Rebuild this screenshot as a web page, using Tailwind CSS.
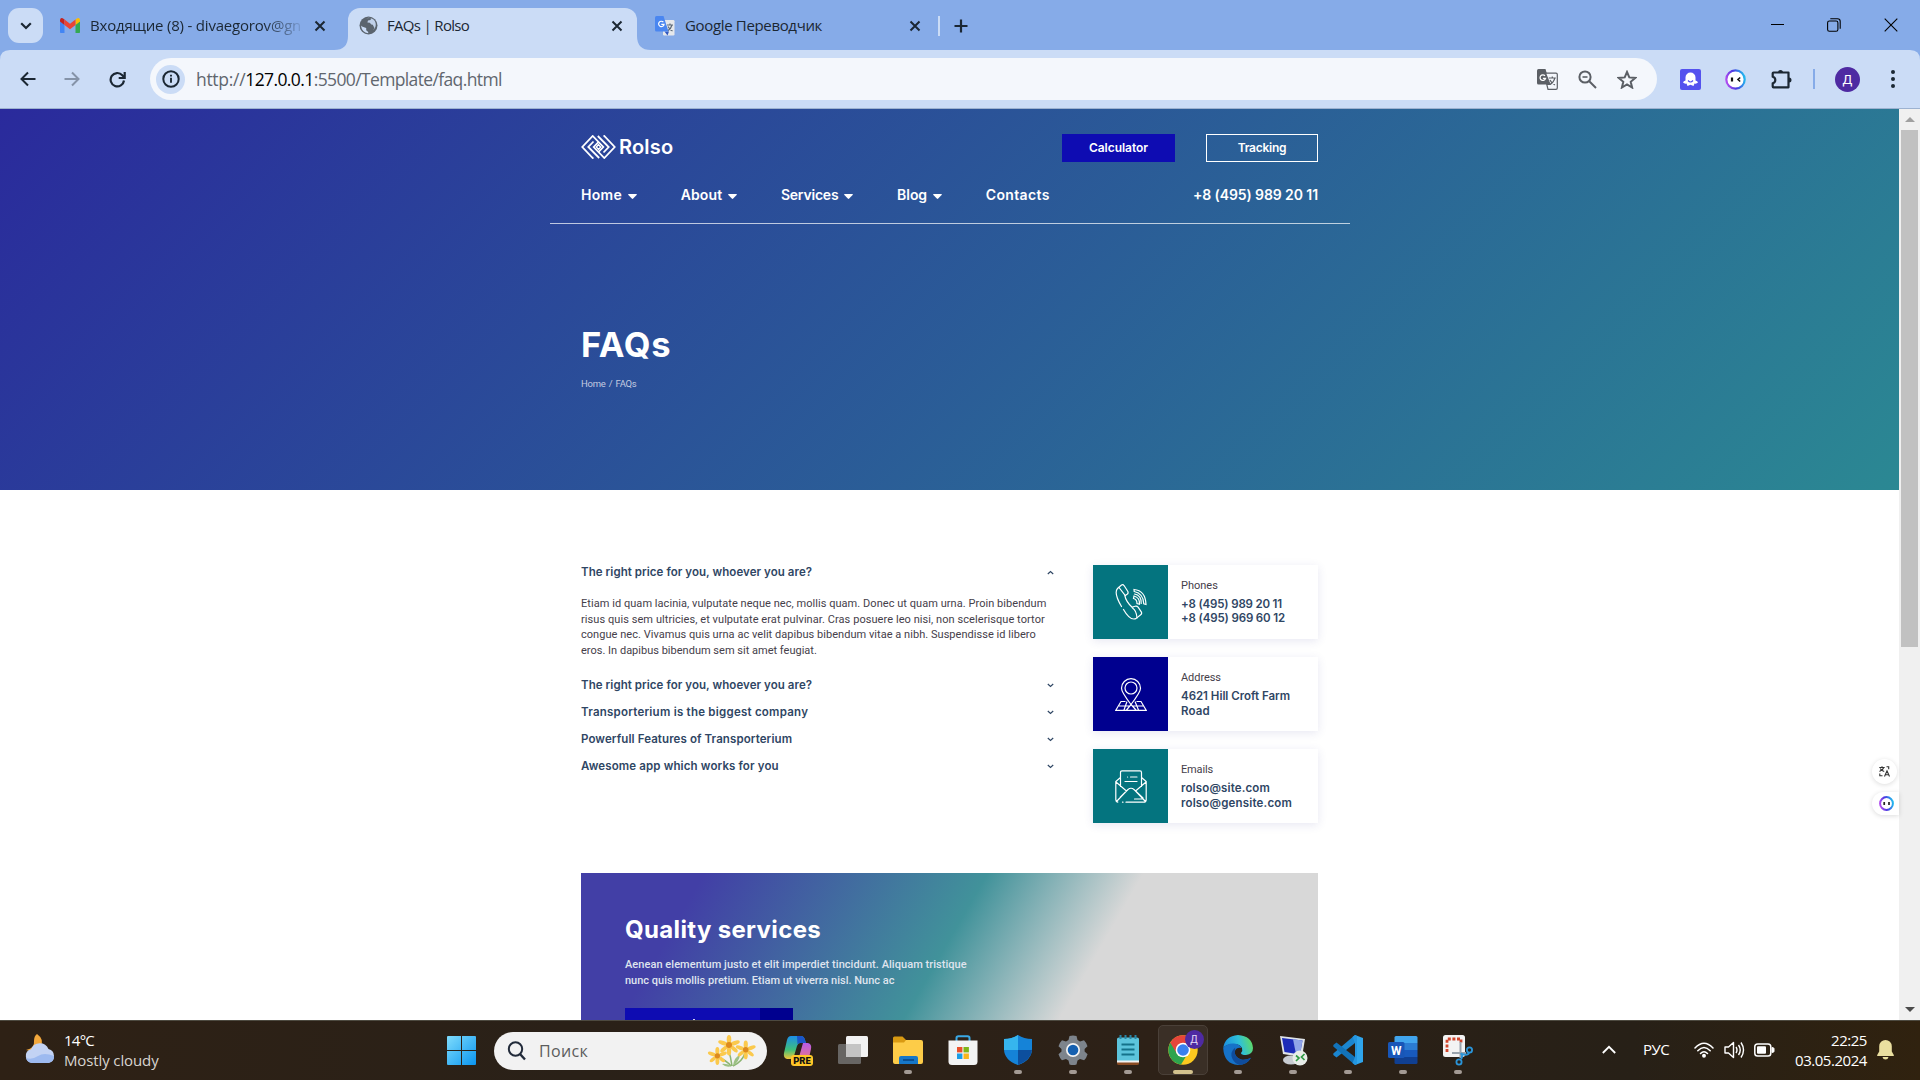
<!DOCTYPE html>
<html lang="ru">
<head>
<meta charset="utf-8">
<title>FAQs | Rolso</title>
<script src="https://cdn.jsdelivr.net/npm/@tailwindcss/browser@4"></script>
</head>
<body class="w-[1920px] h-[1080px] overflow-hidden flex flex-col bg-[#cbdcf6] font-['Open_Sans','Noto_Sans',sans-serif] text-[#1b2733]">

<svg class="absolute w-0 h-0">
  <defs>
    <linearGradient id="ring" x1="0" y1="0.6" x2="1" y2="0.4"><stop offset="0" stop-color="#b04cf0"/><stop offset=".45" stop-color="#4a38e0"/><stop offset="1" stop-color="#22b8ee"/></linearGradient>
    <symbol id="x" viewBox="0 0 12 12"><path d="M1.5 1.5l9 9M10.5 1.5l-9 9" stroke="currentColor" stroke-width="2" fill="none"/></symbol>
    <symbol id="caret" viewBox="0 0 9 5"><path d="M.6 0h7.8q.8.2.2.9L5.2 4.6q-.7.7-1.4 0L.4.9Q-.2.2.6 0z" fill="currentColor"/></symbol>
    <symbol id="chev" viewBox="0 0 7 5"><path d="M.8 1l2.700 2.400L6.200 1" fill="none" stroke="currentColor" stroke-width="1.200"/></symbol>
  </defs>
</svg>

<!-- Tab strip -->
<header class="h-[50px] shrink-0 bg-[#86abe8] flex items-end">
  <div class="w-[348px] h-[50px] pl-2 pt-2 flex relative">
    <div class="w-[35px] h-[35px] rounded-[11px] bg-[#cbdcf6] grid place-items-center"><svg width="12" height="8" viewBox="0 0 12 8"><path d="M1.2 1.2L6 6l4.800-4.800" fill="none" stroke="#1b2733" stroke-width="2.200"/></svg></div>
    <div class="ml-[17px] h-[35px] flex items-center flex-1">
      <svg width="20" height="15" viewBox="0 0 20 15"><path d="M0 2v12.200q0 .8.800.8h3.700V6.500L0 3z" fill="#4285f4"/><path d="M20 2v12.200q0 .8-.8.8h-3.700V6.500L20 3z" fill="#34a853"/><path d="M0 2Q.4-.6 2.700.3L4.500 1.500v5.500L0 3.600z" fill="#c5221f"/><path d="M20 2Q19.600-.6 17.300.3l-1.800 1.200v5.500L20 3.600z" fill="#fbbc04"/><path d="M4.500 1.500L10 5.700l5.500-4.200V7L10 11.200 4.500 7z" fill="#ea4335"/></svg>
      <span class="ml-[10px] w-[212px] overflow-hidden whitespace-nowrap text-[15px] tracking-[-0.200px] [mask-image:linear-gradient(to_right,black_82%,transparent_102%)]">Входящие (8) - divaegorov@gn</span>
      <svg class="ml-[12px] w-3 h-3"><use href="#x"/></svg>
    </div>
    <svg class="absolute right-0 bottom-0" width="14" height="14"><path d="M14 0v14H0Q14 14 14 0z" fill="#cbdcf6"/></svg>
    <svg class="absolute left-0 -bottom-[10px] z-10" width="10" height="10"><path d="M0 0h10Q0 0 0 10z" fill="#86abe8"/></svg>
  </div>
  <div class="w-[289px] h-[42px] rounded-t-[12px] bg-[#cbdcf6] flex items-start">
    <div class="w-full h-[35px] flex items-center pl-[11px]">
      <svg width="19" height="19" viewBox="0 0 19 19"><circle cx="9.500" cy="9.500" r="9" fill="#5b646e"/><path d="M3 10.500l4.200 1.600v2.200l2 1.700v1.300Q3 16.500 1.900 9.500z" fill="#cbdcf6"/><path d="M7 2.300Q10 1.200 12 2.200l-.4 1.800-2.600.5-.6 2 2.400.3 1.500 1.600 1.500.4 1.600 3.200-1.200 2.300q3.300-3.300 2.400-7.200Q15.500 2.500 10.500 2z" fill="#cbdcf6" opacity=".9"/></svg>
      <span class="ml-[9px] w-[224px] whitespace-nowrap text-[15px] tracking-[-0.680px]">FAQs | Rolso</span>
      <svg class="w-3 h-3"><use href="#x"/></svg>
    </div>
  </div>
  <div class="flex-1 h-[50px] pt-2 relative flex">
    <svg class="absolute left-0 bottom-0" width="14" height="14"><path d="M0 0v14h14Q0 14 0 0z" fill="#cbdcf6"/></svg>
    <div class="h-[35px] flex items-center pl-[18px] flex-1">
      <svg width="20" height="20" viewBox="0 0 20 20"><rect x="8" y="4" width="11.500" height="15.500" rx="1.200" fill="#e6e8eb"/><path d="M12 9h6M15 7.500V9M17 9q-1 4-4.500 6M13 10.500q1.500 3 4.500 4.500" stroke="#5f6b78" stroke-width="1.200" fill="none"/><path d="M9.500 15.500l3 4 1.500-4z" fill="#3057c0"/><path d="M1.500 0H8.500L13.500 15.500H1.500Q0 15.500 0 14V1.500Q0 0 1.500 0z" fill="#4a86f0"/><path d="M8.400 6.200A2.700 2.700 0 1 0 9 8.300H6.300" stroke="#fff" stroke-width="1.200" fill="none"/></svg>
      <span class="ml-[10px] w-[224px] whitespace-nowrap text-[15px] tracking-[-0.340px]">Google Переводчик</span>
      <svg class="w-3 h-3"><use href="#x"/></svg>
      <span class="ml-[17px] w-[2px] h-5 bg-[#cbdcf6]"></span>
      <svg class="ml-[14px]" width="14" height="14"><path d="M7 .5v13M.5 7h13" stroke="#1b2733" stroke-width="2.200"/></svg>
    </div>
    <div class="h-[34px] flex items-center gap-[43px] pr-[22px] text-black">
      <svg width="13" height="14" viewBox="0 0 13 14"><path d="M0 6.500h13" stroke="currentColor"/></svg>
      <svg width="14" height="14" viewBox="0 0 14 14" fill="none" stroke="currentColor" stroke-width="1.100"><rect x=".6" y="3" width="10.300" height="10.300" rx="1.800"/><path d="M3.300.8H10.500Q13.200.8 13.200 3.500v7.200"/></svg>
      <svg width="14" height="14" viewBox="0 0 14 14"><path d="M.7.7l12.600 12.600M13.300.7L.7 13.300" stroke="currentColor" stroke-width="1.100"/></svg>
    </div>
  </div>
</header>

<!-- Toolbar -->
<div class="h-[59px] shrink-0 border-b border-[#9db2d0] flex items-center pl-5 relative">
  <svg width="16" height="16" viewBox="0 0 16 16" fill="none" stroke="#1b2733" stroke-width="2"><path d="M15.500 8H2M8 1.500L1.500 8 8 14.500"/></svg>
  <svg class="ml-[28px]" width="16" height="16" viewBox="0 0 16 16" fill="none" stroke="#8593a8" stroke-width="2"><path d="M.5 8H14M8 1.500L14.500 8 8 14.500"/></svg>
  <svg class="ml-[29px]" width="17" height="17" viewBox="0 0 17 17" fill="none" stroke="#1b2733" stroke-width="2.200"><path d="M15 9.500A6.700 6.700 0 1 1 13.300 4.200L15 6"/><path d="M15.700 1v6h-6" /></svg>
  <div class="ml-[24px] w-[1507px] h-[42px] rounded-full bg-[#f4f7fc] flex items-center pl-[6px] pr-[20px]">
    <span class="w-[29px] h-[29px] rounded-full bg-[#cbdcf6] grid place-items-center"><svg width="18" height="18" viewBox="0 0 18 18"><circle cx="9" cy="9" r="7.700" fill="none" stroke="#1b2733" stroke-width="2"/><path d="M9 7.800v5M9 4.700v1.900" stroke="#1b2733" stroke-width="1.900"/></svg></span>
    <div class="ml-[11px] pt-px flex-1 whitespace-nowrap text-[17.500px] text-[#60666e] flex"><span class="tracking-[-0.300px]">http://</span><span class="text-black tracking-[-0.600px]">127.0.0.1</span><span class="tracking-[-0.630px]">:5500/Template/faq.html</span></div>
    <svg width="21" height="21" viewBox="0 0 21 21"><path d="M1.500 0H8.500L13 15.500H1.500Q0 15.500 0 14V1.500Q0 0 1.500 0z" fill="#5b5f65"/><path d="M8.500 4.200H19q1.300 0 1.300 1.300V19q0 1.300-1.300 1.300H11L9.800 15.500h3.200z" fill="#f4f7fc" stroke="#5b5f65" stroke-width="1.200"/><path d="M11.800 9h7M15.300 7.500V9M17.800 9q-1 4.500-5 6.500M13 11q1.500 3.500 5 5" stroke="#5b5f65" stroke-width="1.200" fill="none"/><path d="M8 6.800A2.800 2.800 0 1 0 8.600 9.300H5.900" stroke="#fff" stroke-width="1.300" fill="none"/></svg>
    <svg class="ml-[20px]" width="19" height="19" viewBox="0 0 19 19" fill="none" stroke="#5b5f65" stroke-width="2"><circle cx="7" cy="7" r="5.600"/><path d="M11 11l7 7"/><path d="M4.500 7h5" stroke-width="1.600"/></svg>
    <svg class="ml-[20px]" width="20" height="19" viewBox="0 0 20 19"><path d="M10 2l2.300 5.400 5.900.5-4.500 3.900 1.400 5.700L10 14.400l-5.100 3.100 1.400-5.700L1.800 7.900l5.900-.5z" fill="none" stroke="#5b5f65" stroke-width="2"/></svg>
  </div>
  <svg class="ml-[23px]" width="21" height="21" viewBox="0 0 21 21"><rect width="21" height="21" rx="2" fill="#5452ee"/><path d="M10.500 3.500a5 5 0 0 1 5 5v3q2 .3 2.500 2-1.500 1.500-3.500 1l-1 2.500-3-1.200-3 1.200-1-2.500q-2 .5-3.500-1 .5-1.700 2.500-2v-3a5 5 0 0 1 5-5z" fill="#fff"/><path d="M8 11.500q2.500 3 5 0" fill="none" stroke="#5452ee" stroke-width="1.200"/></svg>
  <svg class="ml-[24px]" width="21" height="21" viewBox="0 0 21 21"><circle cx="10.500" cy="10.500" r="9.200" fill="#fff" stroke="url(#ring)" stroke-width="2.200"/><path d="M7 8.500v4" stroke="#111" stroke-width="2.200"/><path d="M15.200 8.500l-2.200 2 2.200 2" stroke="#111" stroke-width="1.600" fill="none"/></svg>
  <svg class="ml-[25px]" width="21" height="21" viewBox="0 0 21 21"><path d="M2.500 3.500h15v14.800h-15q-.8 0-.8-.8v-3.300q2.600-.6 2.600-3.200T1.700 7.700V4.300q0-.8.800-.8z" fill="none" stroke="#1b2733" stroke-width="2.200" stroke-linejoin="round"/><path d="M7 3.500a2.500 2.500 0 0 1 5 0zM18 8.500a2.500 2.500 0 0 1 0 5z" fill="#1b2733"/></svg>
  <span class="ml-[21px] w-[2px] h-5 bg-[#86abe8]"></span>
  <span class="ml-[20px] w-[25px] h-[25px] rounded-full bg-[#4e2aa2] text-white grid place-items-center font-['Roboto'] text-[13px] leading-none">Д</span>
  <svg class="ml-[31px]" width="4" height="18" fill="#1b2733"><circle cx="2" cy="2" r="2"/><circle cx="2" cy="9" r="2"/><circle cx="2" cy="16" r="2"/></svg>
  <svg class="absolute right-0 top-0" width="10" height="10"><path d="M10 0H0Q10 0 10 10z" fill="#86abe8"/></svg>
</div>

<!-- Viewport -->
<div class="h-[911px] shrink-0 flex bg-white relative overflow-hidden font-['Inter',sans-serif]">
  <div class="w-[1899px] h-full">
    <section class="h-[381px] bg-[linear-gradient(135deg,#2a2a9c,#2b8893)] pl-[550px] pt-[25px] text-white whitespace-nowrap">
      <div class="w-[800px] h-[90px] pl-[31px] pr-[32px] border-b border-white/70">
        <div class="h-[28px] flex items-center">
          <svg class="-mt-[2px]" width="35" height="24" viewBox="0 0 35 24" fill="none" stroke="#fff" stroke-width="1.800"><path d="M12.500 22.500L11.700 23 1.300 12 11.700 1 22.300 12l-4.800 5"/><path d="M22.500 1.500l.8-.5L33.700 12 23.300 23 12.700 12l4.800-5"/><path d="M18.200 23L7.300 12l5.200-5.500M16.800 1L27.700 12l-5.200 5.500"/><path d="M17.500 9.600l2.200 2.400-2.200 2.400-2.200-2.400z" stroke-width="1.400"/></svg>
          <span class="ml-[3px] -mt-[2px] text-[20px] font-semibold tracking-[0.200px] leading-6 flex-1">Rolso</span>
          <span class="w-[113px] h-[28px] pb-px bg-[#0e0cb2] grid place-items-center text-[12px] font-semibold tracking-[-0.040px]">Calculator</span>
          <span class="ml-[31px] w-[112px] h-[28px] pb-px border border-white grid place-items-center text-[12px] font-semibold tracking-[-0.250px]">Tracking</span>
        </div>
        <nav class="mt-[23px] h-5 leading-5 text-[14px] font-semibold flex items-center gap-[43.700px]">
          <span class="flex items-center gap-[6px]"><span class="tracking-[0.290px]">Home</span><svg class="w-[9px] h-[5px] mt-[2px]"><use href="#caret"/></svg></span>
          <span class="flex items-center gap-[6px]"><span class="tracking-[0.110px]">About</span><svg class="w-[9px] h-[5px] mt-[2px]"><use href="#caret"/></svg></span>
          <span class="flex items-center gap-[6px]"><span class="tracking-[-0.210px]">Services</span><svg class="w-[9px] h-[5px] mt-[2px]"><use href="#caret"/></svg></span>
          <span class="flex items-center gap-[6px]"><span class="tracking-[-0.050px]">Blog</span><svg class="w-[9px] h-[5px] mt-[2px]"><use href="#caret"/></svg></span>
          <span class="tracking-[0.360px] flex-1">Contacts</span>
          <span class="tracking-[-0.090px]">+8 (495) 989 20 11</span>
        </nav>
      </div>
      <h1 class="ml-[31px] mt-[101px] h-10 leading-10 text-[34.500px] font-bold tracking-[0.700px]">FAQs</h1>
      <p class="ml-[31px] mt-[12px] h-[14px] leading-[14px] text-[9.500px] tracking-[-0.250px] [word-spacing:1px] text-[#c3cbe0] font-['Roboto']">Home / FAQs</p>
    </section>

    <main class="ml-[581px] w-[737px] pt-[72px]">
      <div class="flex justify-between">
        <div class="w-[473px] pt-px text-[11.500px] font-semibold text-[#2f4664] whitespace-nowrap">
          <div class="h-5 flex items-center justify-between"><span class="tracking-[0.060px]">The right price for you, whoever you are?</span><svg class="w-[7px] h-[5px] rotate-180 mb-px"><use href="#chev"/></svg></div>
          <div class="mt-[13px] mb-[13px] h-[62.400px] font-['Roboto'] font-normal text-[11px] leading-[15.600px] text-[#45404a]">
            <p class="tracking-[0.050px]">Etiam id quam lacinia, vulputate neque nec, mollis quam. Donec ut quam urna. Proin bibendum</p>
            <p class="tracking-[0.070px]">risus quis sem ultricies, et vulputate erat pulvinar. Cras posuere leo nisi, non scelerisque tortor</p>
            <p class="tracking-[0.040px]">congue nec. Vivamus quis urna ac velit dapibus bibendum vitae a nibh. Suspendisse id libero</p>
            <p class="tracking-[0.010px]">eros. In dapibus bibendum sem sit amet feugiat.</p>
          </div>
          <div class="mt-[14px] h-[27px] flex items-center justify-between"><span class="tracking-[0.060px]">The right price for you, whoever you are?</span><svg class="w-[7px] h-[5px]"><use href="#chev"/></svg></div>
          <div class="h-[27px] flex items-center justify-between"><span class="tracking-[0.240px]">Transporterium is the biggest company</span><svg class="w-[7px] h-[5px]"><use href="#chev"/></svg></div>
          <div class="h-[27px] flex items-center justify-between"><span class="tracking-[0.100px]">Powerfull Features of Transporterium</span><svg class="w-[7px] h-[5px]"><use href="#chev"/></svg></div>
          <div class="h-[27px] flex items-center justify-between"><span class="tracking-[0.130px]">Awesome app which works for you</span><svg class="w-[7px] h-[5px]"><use href="#chev"/></svg></div>
        </div>

        <aside class="mt-[3px] w-[225px] flex flex-col gap-[18px] text-[11.500px] leading-[15px] font-semibold text-[#2f4664] whitespace-nowrap">
          <div class="h-[74px] flex bg-white shadow-[0_2px_9px_rgba(60,60,150,0.12)]">
            <div class="w-[75px] bg-[#04747f] grid place-items-center"><svg width="32" height="36" viewBox="0 0 32 36" fill="none" stroke="#fff" stroke-width="1.200" stroke-linecap="round"><path d="M6.500 22.500Q-1.500 9 2.500 4.500L6.500 1q1.500-.8 2.700.8l3.500 5.500q1 1.800-.6 3l-2.200 1.500q1 5.500 7.200 11.500l2.700-1q2-.8 3.300.8l3.300 5q.8 1.800-1 3l-4.500 3.500Q15 37 8.500 25.500"/><path d="M4 3.500l6.500 8.300M17.500 24q4 2.500 4.500 10"/><path d="M18.500 14.500q3.500.8 3.500 5l2.500.8q.5-6.800-5.500-8.300zM19.500 10q7 1.200 6.700 9.500M19 5.500Q30.500 6.500 31 20.500l-2.200-.6Q28.500 9.500 19.200 7.500z"/></svg></div>
            <div class="pl-[13px] pt-[13px]"><p class="font-['Roboto'] font-normal text-[11px] leading-[15px] mb-[4px] text-[#45404a]">Phones</p><p class="tracking-[-0.170px] leading-[14px]">+8 (495) 989 20 11</p><p class="tracking-[-0.140px] leading-[14px]">+8 (495) 969 60 12</p></div>
          </div>
          <div class="h-[74px] flex bg-white shadow-[0_2px_9px_rgba(60,60,150,0.12)]">
            <div class="w-[75px] bg-[#00008f] grid place-items-center"><svg width="32" height="33" viewBox="0 0 32 33" fill="none" stroke="#fff" stroke-width="1.200"><path d="M16 26.500Q6.500 14 6.500 10.200a9.500 9.500 0 0 1 19 0Q25.500 14 16 26.500z"/><circle cx="16" cy="10" r="6"/><path d="M10.500 23.500H6L.8 32.300h30.400L26 23.500h-4.500M4 28h10M18 28h10.500M12 23.500L9 32M20 23.500L23.500 32M16 26.500L11.500 32M16 26.500L21 32"/></svg></div>
            <div class="pl-[13px] pt-[13px]"><p class="font-['Roboto'] font-normal text-[11px] leading-[15px] mb-[4px] tracking-[-0.060px] text-[#45404a]">Address</p><p class="tracking-[-0.020px]">4621 Hill Croft Farm</p><p class="tracking-[0.180px]">Road</p></div>
          </div>
          <div class="h-[74px] flex bg-white shadow-[0_2px_9px_rgba(60,60,150,0.12)]">
            <div class="w-[75px] bg-[#04747f] grid place-items-center"><svg width="32" height="33" viewBox="0 0 32 33" fill="none" stroke="#fff" stroke-width="1.200" stroke-linecap="round"><path d="M5.500 16.500V2.500Q5.500.8 7 .8h18q1.500 0 1.500 1.700v14M5.500 7.500L.8 11.500v18.200q0 2 2 2.500M26.500 7.500l4.700 4v18.200q0 2.500-2.500 2.500H11M7.500 32.200h.5M1 12l10.500 9L1.500 31.500M31 12l-10.500 9 10 10.500M5 27.500L13 19.500q3-2.500 6 0l9 8.500M10 11.500h12M15.500 7H22M12.500 7h.1M19.500 29H28"/></svg></div>
            <div class="pl-[13px] pt-[13px]"><p class="font-['Roboto'] font-normal text-[11px] leading-[15px] mb-[4px] tracking-[-0.150px] text-[#45404a]">Emails</p><p class="tracking-[0.150px]">rolso@site.com</p><p class="tracking-[0.180px]">rolso@gensite.com</p></div>
          </div>
        </aside>
      </div>

      <section class="mt-[50px] h-[147px] overflow-hidden bg-[linear-gradient(120deg,#423fa6_15%,#41929a_49.500%,#d8d8d8_68.500%)] pl-[44px] pt-[41px] text-white whitespace-nowrap">
        <h2 class="h-[32px] leading-[32px] text-[24px] font-bold tracking-[0.340px]">Quality services</h2>
        <div class="mt-[11px] font-['Roboto'] font-medium text-[11px] leading-[16px] text-[#dfe4ee]"><p class="tracking-[0.050px]">Aenean elementum justo et elit imperdiet tincidunt. Aliquam tristique</p><p>nunc quis mollis pretium. Etiam ut viverra nisl. Nunc ac</p></div>
        <div class="mt-[19px] w-[168px] h-[44px] flex"><span class="w-[135px] bg-[#0e0cb2] flex justify-center"><span class="w-[2px] h-px mt-[11px] ml-[3px] bg-white/80"></span></span><span class="flex-1 bg-[#00008f]"></span></div>
      </section>
    </main>
  </div>

  <div class="w-[21px] bg-[#f0f0f0] flex flex-col items-center">
    <div class="h-[21px] grid place-items-center"><svg width="10" height="5"><path d="M0 5L5 0l5 5z" fill="#a0a0a0"/></svg></div>
    <div class="w-[17px] h-[517px] bg-[#c1c1c1]"></div>
    <div class="mt-auto h-[21px] grid place-items-center"><svg width="10" height="5"><path d="M0 0h10L5 5z" fill="#4c4c4c"/></svg></div>
  </div>

  <!-- floating helper buttons -->
  <div class="absolute left-[1872px] top-[650px] w-[25px] h-[25px] rounded-full bg-white shadow-[0_1px_5px_rgba(0,0,0,0.14)] grid place-items-center"><svg width="11" height="11" viewBox="0 0 11 11" fill="none" stroke="#333" stroke-width="1.100"><path d="M.3 1.500h5.400M3 .3v1.200M4.800 1.500Q4 4 .5 5.500M1.200 2.500q1 2 4 3M5.500 10.500L8 4.800l2.500 5.700M6.400 8.700h3.200M7.500.8h2.200v2.400M.8 7.500v2.300h2.700"/></svg></div>
  <div class="absolute left-[1872px] top-[683px] w-[27px] h-[23px] rounded-l-full bg-white shadow-[0_1px_5px_rgba(0,0,0,0.14)] flex items-center pl-[7px]"><svg width="15" height="15" viewBox="0 0 21 21"><circle cx="10.500" cy="10.500" r="9" fill="#fff" stroke="url(#ring)" stroke-width="2.800"/><path d="M7.300 8.500v4M14 8.500v4" stroke="#222" stroke-width="2.400"/></svg></div>
</div>

<!-- Taskbar -->
<footer class="h-[60px] shrink-0 bg-[linear-gradient(to_right,#2e2115,#2a2118_30%,#2d2117_60%,#272017_85%,#30220f)] border-t border-[#4d4a40] flex items-center relative text-white whitespace-nowrap">
  <div class="w-[447px] flex items-center pl-[24px]">
    <svg class="-mt-[4px]" width="32" height="32" viewBox="0 0 32 32"><path d="M13 1q7 5 4 12t-15 4q9-2 8-9 0-5 3-7z" fill="#f3a83c"/><path d="M8 30a7 7 0 0 1-1-13.700 9.500 9.500 0 0 1 17.500-.3A7.200 7.200 0 0 1 24.500 30z" fill="#c3d3f4"/><path d="M8 30a7 7 0 0 1-6-5q6 2 12-2t16 0a7 7 0 0 1-5.500 7z" fill="#9dbaf0"/></svg>
    <div class="ml-[8px] -mt-[2px] text-[15px] leading-5"><p class="tracking-[-0.760px]">14°C</p><p class="tracking-[-0.120px] text-[#d8d4d0]">Mostly cloudy</p></div>
  </div>
  <svg width="29" height="29" viewBox="0 0 29 29"><defs><linearGradient id="win" x1="0" y1="0" x2="1" y2="1"><stop offset="0" stop-color="#7fdcfc"/><stop offset="1" stop-color="#0a95f0"/></linearGradient></defs><path d="M0 1q0-1 1-1h13v14H0zM15 0h13q1 0 1 1v13H15zM0 15h14v14H1q-1 0-1-1zM15 15h14v13q0 1-1 1H15z" fill="url(#win)"/></svg>
  <div class="ml-[18px] w-[273px] h-[38px] rounded-full bg-[#f2f2f2] flex items-center pl-[13px] pr-[10px] text-[#5c5c5c]">
    <svg width="19" height="20" viewBox="0 0 19 20" fill="none" stroke="#222b3a" stroke-width="2"><circle cx="8.500" cy="8" r="6.700"/><path d="M13 13l5 5.500" stroke-width="2.400"/></svg>
    <span class="ml-[13px] flex-1 text-[16px] tracking-[0.330px]">Поиск</span>
    <svg width="50" height="32" viewBox="0 0 50 32"><path d="M21 14q3 8 4 17M11 22q8 3 13 9M38 18q-3 9-12 13" fill="none" stroke="#8bb472" stroke-width="1.500"/><path d="M25 31q-7-3-10-2 4 4 10 2M26 31q1-9 7-11-1 7-7 11" fill="#9cc084"/><g fill="#fbc94c"><g id="fl"><ellipse cx="22" cy="4.500" rx="2.300" ry="4.500"/><ellipse cx="22" cy="16" rx="2.200" ry="4.500"/><ellipse cx="16" cy="8" rx="5" ry="2.100" transform="rotate(20 16 8)"/><ellipse cx="28" cy="8" rx="5" ry="2.100" transform="rotate(-20 28 8)"/><ellipse cx="17" cy="14" rx="4.500" ry="2" transform="rotate(-40 17 14)"/><ellipse cx="27" cy="14" rx="4.500" ry="2" transform="rotate(40 27 14)"/><circle cx="22" cy="10" r="3" fill="#dd8a1e"/></g><use href="#fl" transform="translate(18.500 5.500) scale(.92)"/><use href="#fl" transform="translate(-9 12) scale(.88)"/></g></svg>
  </div>

  <div class="ml-[3px] flex h-full">
    <div class="w-[55px] pt-[12px] flex flex-col items-center"><svg width="34" height="34" viewBox="0 0 34 34"><defs><linearGradient id="cp" x1="0" y1="0" x2="0" y2="1"><stop offset="0" stop-color="#1c8fe8"/><stop offset=".6" stop-color="#3fbf7a"/><stop offset="1" stop-color="#f3c63a"/></linearGradient><linearGradient id="cq" x1="0" y1="0" x2="0" y2="1"><stop offset="0" stop-color="#b65be8"/><stop offset="1" stop-color="#f0787a"/></linearGradient></defs><path d="M10 3h10q3 0 4 4l1 3h-6q-2 0-3 3l-3 10q-1 3-4 3H6q-4-1-3-6l3-13q1-4 4-4z" fill="url(#cp)"/><path d="M16 3h4q3 0 4 4l1 3h-6q-2 0-2.500 1.500z" fill="#1a55c8"/><path d="M22 10h5q4 1 3 6l-2 9q-1 4-5 4h-9q3-1 4-5z" fill="url(#cq)"/><rect x="10" y="22" width="22" height="11" rx="3" fill="#ffc628"/><text x="21" y="31" text-anchor="middle" font-family="Roboto" font-weight="900" font-size="9.500" fill="#111">PRE</text></svg></div>
    <div class="w-[55px] pt-[14px] flex flex-col items-center"><svg width="30" height="30" viewBox="0 0 30 30"><rect x="8" y="1" width="22" height="21" rx="1.500" fill="#f2f2f2"/><rect x="0" y="9" width="23" height="20" rx="1.500" fill="#777" opacity=".8"/><rect x="8" y="9" width="15" height="13" fill="#c4c4c4"/></svg></div>
    <div class="w-[55px] pt-[14px] flex flex-col items-center"><svg width="30" height="30" viewBox="0 0 30 30"><path d="M0 3q0-1.500 1.500-1.500h8L13 5v4H0z" fill="#d99a12"/><path d="M0 7.500h11L13 5h15q2 0 2 2v20q0 2-2 2H2q-2 0-2-2z" fill="#fdcc48"/><path d="M6 29v-6q0-2 2-2h15q2 0 2 2v6z" fill="#1677c8"/><path d="M10 25h11" stroke="#0a4f92" stroke-width="2"/></svg><span class="mt-[5px] w-2 h-1 rounded-full bg-[#a39a94]"></span></div>
    <div class="w-[55px] pt-[14px] flex flex-col items-center"><svg width="30" height="31" viewBox="0 0 30 31"><path d="M8.500 7V3q0-1.800 2-1.800h9q2 0 2 1.800v4" stroke="#3aa9e6" stroke-width="2" fill="none"/><path d="M.5 5.500h29v21q0 3.500-3.500 3.500H4Q.5 30 .5 26.500z" fill="#f3f3f3"/><path d="M9 12h5.400v5.400H9z" fill="#e8502a"/><path d="M15.500 12h5.400v5.400h-5.400z" fill="#7eb518"/><path d="M9 18.500h5.400V24H9z" fill="#1b9de6"/><path d="M15.500 18.500h5.400V24h-5.400z" fill="#f9b51c"/></svg></div>
    <div class="w-[55px] pt-[14px] flex flex-col items-center"><svg width="30" height="30" viewBox="0 0 30 30"><path d="M15 0q6 4 14 4v10q0 11-14 16Q1 25 1 14V4q8 0 14-4z" fill="#1583d8"/><path d="M15 0v15H1V4q8 0 14-4z" fill="#36b5ee"/><path d="M15 15h14Q28 25 15 30z" fill="#0c4f9e"/></svg><span class="mt-[5px] w-2 h-1 rounded-full bg-[#a39a94]"></span></div>
    <div class="w-[55px] pt-[14px] flex flex-col items-center"><svg width="30" height="30" viewBox="0 0 30 30"><path d="M11.500 1q3.500-1 7 0l1 4 2.500 1.500 4-1.300q2.500 2.500 3.500 6L26.600 14v2.500l3 2.800q-1 3.500-3.500 6L22 24l-2.500 1.500-1 4q-3.500 1-7 0l-1-4L8 24l-4 1.300q-2.500-2.500-3.500-6l3-2.800V14l-3-2.800q1-3.500 3.500-6l4 1.300L10.500 5z" fill="#7d848c"/><circle cx="15" cy="15" r="7" fill="#f4f4f4"/><circle cx="15" cy="15" r="5.300" fill="#1560b0"/></svg><span class="mt-[5px] w-2 h-1 rounded-full bg-[#a39a94]"></span></div>
    <div class="w-[55px] pt-[14px] flex flex-col items-center"><svg width="24" height="30" viewBox="0 0 24 30"><path d="M1 27h22v1.500q0 1.500-2 1.500H3q-2 0-2-1.500z" fill="#8a4b22"/><path d="M1 4q0-1.500 2-1.500h18q2 0 2 1.500v22H1z" fill="#5cc4dc"/><path d="M1 25.500h22v2H1z" fill="#f2f2f2"/><path d="M4.500 0v4M9.500 0v4M14.500 0v4M19.500 0v4" stroke="#2787a8" stroke-width="2"/><path d="M5.500 9.500h13M5.500 14.500h13M5.500 19.500h13" stroke="#14728a" stroke-width="1.800"/></svg><span class="mt-[5px] w-2 h-1 rounded-full bg-[#a39a94]"></span></div>
    <div class="w-[55px] pt-[4px] flex flex-col items-center"><div class="w-[50px] h-[50px] rounded-[5px] bg-[#3a2f26] border border-[#4a4038] flex flex-col items-center pt-[4px] relative"><svg class="mt-[5px]" width="30" height="30" viewBox="0 0 30 30"><circle cx="15" cy="15" r="14.700" fill="#fcc91f"/><path d="M15 15L2.300 7.700A14.700 14.700 0 0 0 13 29.600L19.500 19z" fill="#2da44e"/><path d="M15 .3A14.700 14.700 0 0 0 2.300 7.700L8.800 18.500 15 8h13A14.700 14.700 0 0 0 15 .3z" fill="#e6453a"/><circle cx="15" cy="15" r="7.300" fill="#fff"/><circle cx="15" cy="15" r="5.800" fill="#3a80ee"/></svg><span class="mt-[5px] w-5 h-1 rounded-full bg-[#d3c28e]"></span><span class="absolute left-[26px] top-[4px] w-[19px] h-[19px] rounded-full bg-[#4e2aa2] grid place-items-center font-['Roboto'] text-[10px] leading-none text-[#e5dcf8]">Д</span></div></div>
    <div class="w-[55px] pt-[14px] flex flex-col items-center"><svg width="30" height="30" viewBox="0 0 30 30"><defs><linearGradient id="eg" x1="0" y1="0.500" x2="1" y2="0.300"><stop offset="0" stop-color="#1b8ee0"/><stop offset=".55" stop-color="#2fc0d8"/><stop offset="1" stop-color="#62dd5e"/></linearGradient></defs><path d="M.2 13Q2 1 15 0q14 1 15 13 0 6-7 7-5 0-5-2 2-2 1-5-2-4-8-4-8 0-10.800 4z" fill="url(#eg)"/><path d="M.2 13Q4 8 11 8.500q6 .5 7.500 4.500-5-1-6.500 3-1 6 6 8.500 5 1 10-1.700Q24 30 15 30 1 29 .2 13z" fill="#1672c8"/><path d="M12.200 12.500q-6 5-2.700 11.500Q12 29 17 29.900 24 29.500 28 22.800q-5 2.700-10 1.700-7-2.500-6-8.500z" fill="#0f4c9c"/></svg><span class="mt-[5px] w-2 h-1 rounded-full bg-[#a39a94]"></span></div>
    <div class="w-[55px] pt-[14px] flex flex-col items-center"><svg width="30" height="31" viewBox="0 0 30 31"><path d="M2 1l25 3-3 18-19-3z" fill="#dfe3e8"/><path d="M4 3l20.500 2.500L22 19.500 6.500 17z" fill="#1c2bb8"/><path d="M15 4.300l9.500 1.200L22 19.500l-4-.6z" fill="#8fa4e8"/><ellipse cx="13" cy="25" rx="8" ry="4.500" fill="#c8ccd2"/><circle cx="22" cy="23" r="7.500" fill="#e8ece8"/><path d="M18 20.500l3 2.500-3 3M26.500 19l-3 3 3 3" fill="none" stroke="#2f9a44" stroke-width="1.700"/></svg><span class="mt-[4px] w-2 h-1 rounded-full bg-[#a39a94]"></span></div>
    <div class="w-[55px] pt-[14px] flex flex-col items-center"><svg width="30" height="30" viewBox="0 0 30 30"><path d="M22 0l8 3v24l-8 3z" fill="#2fa5ec"/><path d="M22 0v8L3.500 22.500.3 20v-1.500z" fill="#1b86d0"/><path d="M22 30v-8L3.500 7.500.3 10v1.500z" fill="#1273ba"/><path d="M22 0l2 1v28l-2 1L19.500 28l2.500-6V8l-2.500-6z" fill="#2496e0"/></svg><span class="mt-[5px] w-2 h-1 rounded-full bg-[#a39a94]"></span></div>
    <div class="w-[55px] pt-[14px] flex flex-col items-center"><svg width="30" height="30" viewBox="0 0 30 30"><path d="M8 1h20q1.500 0 1.500 1.500V8H6.500V2.500Q6.500 1 8 1z" fill="#41a5ee"/><path d="M6.500 8h23v7h-23z" fill="#2b7cd3"/><path d="M6.500 15h23v7h-23z" fill="#185abd"/><path d="M6.500 22h23v5.500q0 1.500-1.500 1.500H8q-1.500 0-1.500-1.500z" fill="#103f91"/><rect x="0" y="7" width="16.500" height="16" rx="1.500" fill="#1856b8"/><text x="8.200" y="19.500" text-anchor="middle" font-family="Roboto" font-weight="700" font-size="12" fill="#fff">W</text></svg><span class="mt-[5px] w-2 h-1 rounded-full bg-[#a39a94]"></span></div>
    <div class="w-[55px] pt-[14px] flex flex-col items-center"><svg width="30" height="31" viewBox="0 0 30 31"><rect x="0" y="0" width="22" height="22" rx="2.500" fill="#f3f3f3"/><path d="M4 17V4h14v4" fill="none" stroke="#d1452c" stroke-width="2.800" stroke-dasharray="3 1.600"/><path d="M17.500 7v16M9 18h14" stroke="#9aa4ad" stroke-width="2"/><circle cx="26.500" cy="15" r="2.600" fill="none" stroke="#2a94d8" stroke-width="1.800"/><path d="M26 18q-1 3-8 1M18 18q2 4 0 6" stroke="#2a94d8" stroke-width="2" fill="none"/><circle cx="16" cy="27" r="2.600" fill="none" stroke="#2a94d8" stroke-width="1.800"/></svg><span class="mt-[4px] w-2 h-1 rounded-full bg-[#a39a94]"></span></div>
  </div>

  <div class="ml-auto -mt-[2px] pr-[26px] flex items-center">
    <svg width="14" height="9" viewBox="0 0 14 9"><path d="M.8 8L7 1.800 13.200 8" fill="none" stroke="#fff" stroke-width="1.800"/></svg>
    <span class="ml-[27px] text-[15px] tracking-[-0.580px]">РУС</span>
    <svg class="ml-[25px]" width="20" height="16" viewBox="0 0 20 16" fill="none" stroke="#fff" stroke-width="1.500" stroke-linecap="round"><path d="M1 6Q10-3.500 19 6M3.800 8.800Q10 2.200 16.200 8.800M6.500 11.500Q10 7.800 13.500 11.500"/><circle cx="10" cy="13.800" r="1.200" fill="#fff"/></svg>
    <svg class="ml-[10px]" width="21" height="18" viewBox="0 0 21 18" fill="none" stroke="#fff" stroke-width="1.400"><path d="M1 6h3.500L9.500 1.500v15L4.500 12H1z" stroke-linejoin="round"/><path d="M12 6q2 3 0 6M14.500 4q3.500 5 0 10M17 1.500q5 7.500 0 15"/></svg>
    <svg class="ml-[9px]" width="21" height="14" viewBox="0 0 21 14"><rect x=".8" y="1" width="16" height="12" rx="2.800" fill="none" stroke="#fff" stroke-width="1.500"/><rect x="3" y="3.200" width="9" height="7.600" rx="1" fill="#fff"/><path d="M18 4.500l2 .7v3.600l-2 .7z" fill="#fff" stroke="#fff"/></svg>
    <div class="ml-[20px] text-right text-[15px] leading-5 tracking-[-0.450px]"><p>22:25</p><p>03.05.2024</p></div>
    <svg class="ml-[10px]" width="17" height="20" viewBox="0 0 17 20"><path d="M8.500 0a6.300 6.300 0 0 1 6.300 6.300v5.200l2 3.500q.3 1-.8 1H1q-1.100 0-.8-1l2-3.500V6.300A6.300 6.300 0 0 1 8.500 0zM5.500 17h6q-.5 2.500-3 2.500t-3-2.500z" fill="#eadf9f"/></svg>
  </div>
</footer>
</body>
</html>
